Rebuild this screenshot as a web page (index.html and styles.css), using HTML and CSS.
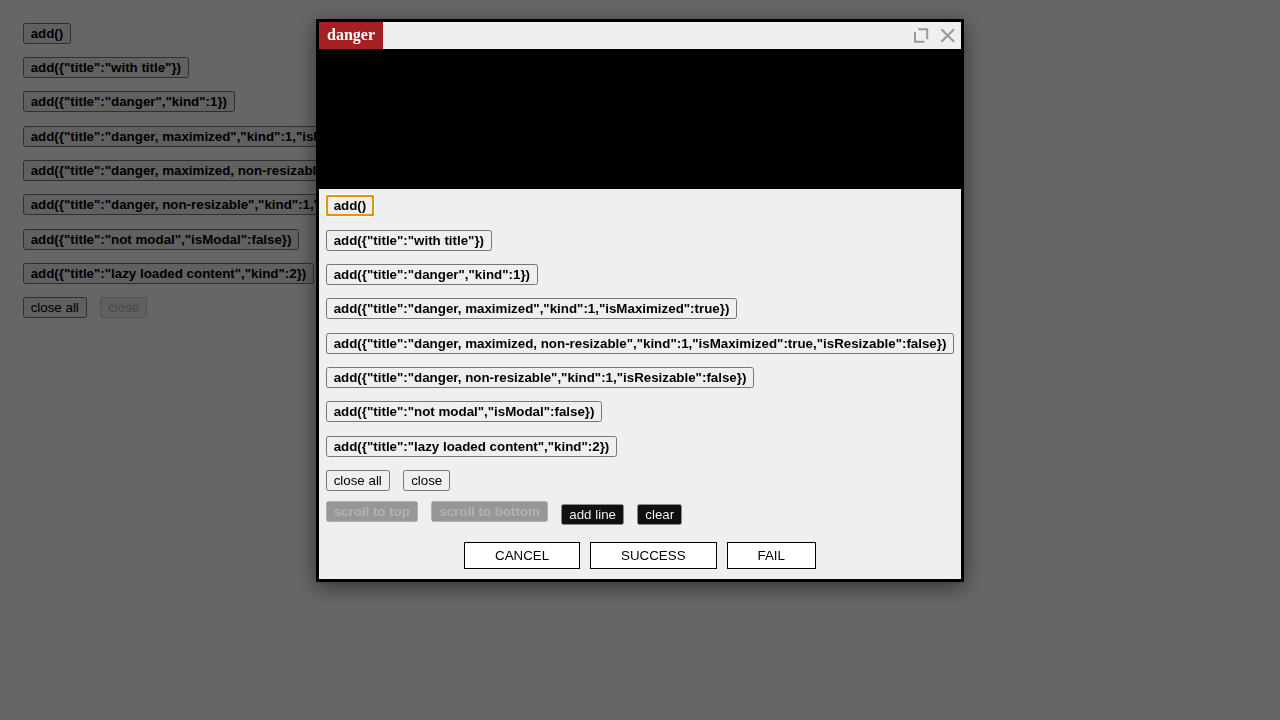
FILE: index.html
```html
<!DOCTYPE html>
<html lang="en">
<head>
<meta charset="utf-8">
<title>Dialogs</title>
<link rel="stylesheet" href="styles.css">
</head>
<body>
<main class="page">
  <div class="row"><button class="strong">add()</button></div>
  <div class="row"><button class="strong">add({"title":"with title"})</button></div>
  <div class="row"><button class="strong">add({"title":"danger","kind":1})</button></div>
  <div class="row"><button class="strong">add({"title":"danger, maximized","kind":1,"isMaximized":true})</button></div>
  <div class="row"><button class="strong">add({"title":"danger, maximized, non-resizable","kind":1,"isMaximized":true,"isResizable":false})</button></div>
  <div class="row"><button class="strong">add({"title":"danger, non-resizable","kind":1,"isResizable":false})</button></div>
  <div class="row"><button class="strong">add({"title":"not modal","isModal":false})</button></div>
  <div class="row"><button class="strong">add({"title":"lazy loaded content","kind":2})</button></div>
  <div class="row"><button>close all</button><button disabled>close</button></div>
</main>
<div class="overlay">
  <section class="dialog" role="dialog">
    <header class="header">
      <span class="title">danger</span>
      <span class="tools">
        <svg width="16" height="16" viewBox="0 0 16 16"><path d="M5.3 2.2H14.2V12.2M2 5V14.7H11.3"/></svg>
        <svg width="16" height="16" viewBox="0 0 16 16"><path d="M2.4 2.2L15 14.8M15 2.2L2.4 14.8"/></svg>
      </span>
    </header>
    <div class="canvas"></div>
    <div class="content">
      <div class="row"><button class="strong focused">add()</button></div>
      <div class="row"><button class="strong">add({"title":"with title"})</button></div>
      <div class="row"><button class="strong">add({"title":"danger","kind":1})</button></div>
      <div class="row"><button class="strong">add({"title":"danger, maximized","kind":1,"isMaximized":true})</button></div>
      <div class="row"><button class="strong">add({"title":"danger, maximized, non-resizable","kind":1,"isMaximized":true,"isResizable":false})</button></div>
      <div class="row"><button class="strong">add({"title":"danger, non-resizable","kind":1,"isResizable":false})</button></div>
      <div class="row"><button class="strong">add({"title":"not modal","isModal":false})</button></div>
      <div class="row"><button class="strong">add({"title":"lazy loaded content","kind":2})</button></div>
      <div class="row"><button>close all</button><button>close</button></div>
      <div class="row lines">
        <button class="strong scroll" disabled>scroll to top</button><button class="strong scroll" disabled>scroll to bottom</button><button class="dark">add line</button><button class="dark">clear</button>
      </div>
    </div>
    <footer class="footer">
      <button class="action">CANCEL</button><button class="action">SUCCESS</button><button class="action">FAIL</button>
    </footer>
  </section>
</div>
</body>
</html>
```
FILE: styles.css
```css
body {
  margin: 0;
  height: 720px;
  overflow: hidden;
  background: #fff;
  font-family: "Liberation Serif", serif;
}
button {
  font-family: "Liberation Sans", Arial, sans-serif;
  font-size: 13.3333px;
  height: 21px;
  flex: none;
  white-space: nowrap;
}
.strong { font-weight: bold; }
.page { padding: 22.67px 0 0 22.67px; }
.row {
  display: flex;
  align-items: flex-start;
  gap: 13.33px;
  height: 34.34px;
}
.overlay {
  position: fixed;
  inset: 0;
  display: flex;
  justify-content: center;
  align-items: flex-start;
  padding-top: 19px;
  background: rgba(0, 0, 0, 0.6);
}
.dialog {
  width: 642px;
  height: 557px;
  border: 3px solid #000;
  background: #efefef;
  box-shadow: 0 5px 20px rgba(0, 0, 0, 0.5);
}
.header {
  display: flex;
  justify-content: space-between;
  height: 27px;
}
.title {
  padding: 0 8px;
  background: #a52020;
  color: #fff;
  font-size: 16px;
  font-weight: bold;
  line-height: 25px;
}
.tools {
  display: flex;
  align-items: center;
  gap: 10px;
  padding: 0 6px 1px 0;
}
.tools svg {
  fill: none;
  stroke: #999;
  stroke-width: 2;
  overflow: visible;
}
.canvas { height: 140px; background: #000; }
.content { padding: 6.33px 6.67px 0; }
.focused {
  outline: 2px solid #e59700;
  outline-offset: -2px;
  border-radius: 3px;
  box-shadow: 0 0 0 1px #fff;
}
.lines { height: 41px; margin-top: -3.33px; }
.scroll { filter: invert(1); }
.dark { filter: invert(1); margin-top: 3px; }
.footer {
  display: flex;
  justify-content: center;
  gap: 10px;
}
.action {
  height: 27px;
  padding: 0 30px;
  border: 1px solid #000;
  background: #fff;
  color: #000;
}
```
